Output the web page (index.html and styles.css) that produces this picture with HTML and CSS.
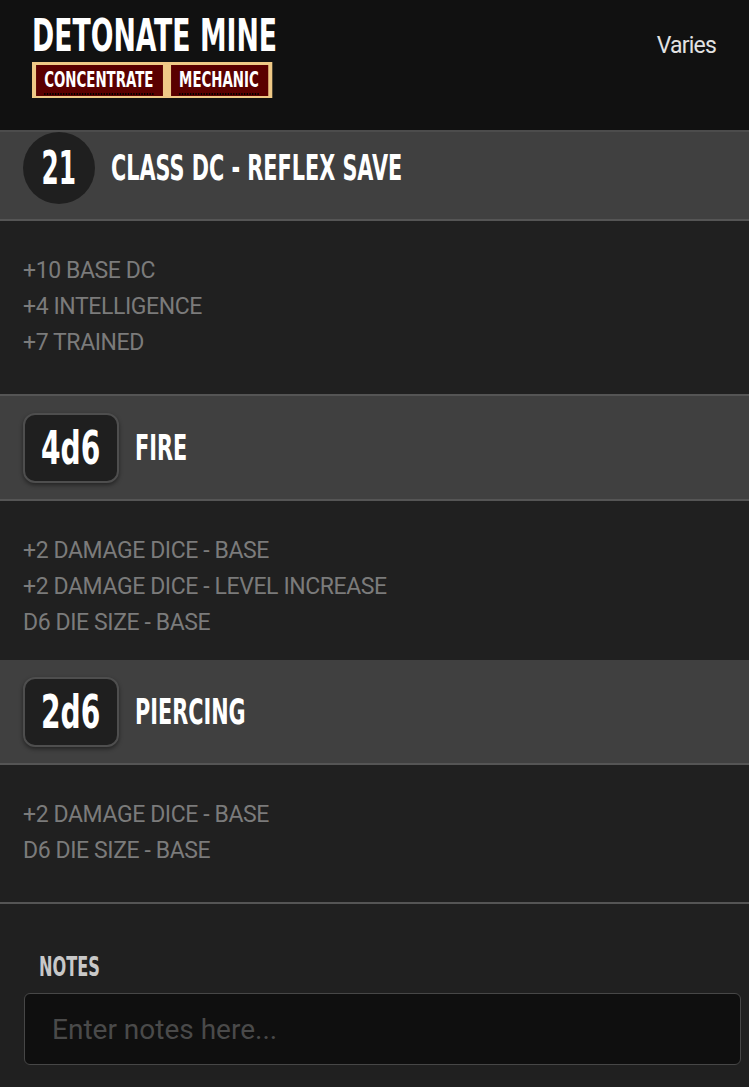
FILE: index.html
```html
<!DOCTYPE html>
<html lang="en">
<head>
    <meta charset="UTF-8">
    <meta name="viewport" content="width=device-width, initial-scale=1.0">
    <title>Detonate Mine</title>
    <link rel="stylesheet" href="styles.css">
</head>
<body>
    <div class="top">
        <div class="heading">
            <h1 class="name">DETONATE MINE</h1>
            <div class="traits">
                <span class="trait"><span>CONCENTRATE</span></span>
                <span class="trait"><span>MECHANIC</span></span>
            </div>
        </div>
        <div class="cost">Varies</div>
    </div>

    <div class="roll-head first">
        <div class="dc"><span>21</span></div>
        <h2 class="roll-title"><span>CLASS DC - REFLEX SAVE</span></h2>
    </div>
    <ul class="roll-list lined">
        <li>+10 BASE DC</li>
        <li>+4 INTELLIGENCE</li>
        <li>+7 TRAINED</li>
    </ul>

    <div class="roll-head">
        <div class="dice"><span>4d6</span></div>
        <h2 class="roll-title"><span>FIRE</span></h2>
    </div>
    <ul class="roll-list short">
        <li>+2 DAMAGE DICE - BASE</li>
        <li>+2 DAMAGE DICE - LEVEL INCREASE</li>
        <li>D6 DIE SIZE - BASE</li>
    </ul>

    <div class="roll-head">
        <div class="dice"><span>2d6</span></div>
        <h2 class="roll-title"><span>PIERCING</span></h2>
    </div>
    <ul class="roll-list lined">
        <li>+2 DAMAGE DICE - BASE</li>
        <li>D6 DIE SIZE - BASE</li>
    </ul>

    <div class="notes">
        <label for="notes" class="notes-label"><span>NOTES</span></label>
        <input type="text" id="notes" placeholder="Enter notes here...">
    </div>
</body>
</html>
```

FILE: styles.css
```css
body {
    margin: 0;
    background-color: #202020;
    font-family: Roboto, "Liberation Sans", sans-serif;
}
.top {
    display: flex;
    justify-content: space-between;
    align-items: flex-start;
    height: 132px;
    box-sizing: border-box;
    padding: 14px 33px 0 32px;
    background-color: #111111;
    border-bottom: 2px solid #4c4c4c;
}
.heading {
    transform: scaleX(0.675);
    transform-origin: left top;
}
.name {
    margin: 0;
    font: bold 44px/44px "DejaVu Sans Condensed", "DejaVu Sans", sans-serif;
    color: #ffffff;
    white-space: nowrap;
}
.traits {
    display: inline-flex;
    gap: 12px;
    margin-top: 4px;
    padding: 3px 6px 2px;
    background-color: #efc986;
}
.trait {
    padding: 2px 14px 1px 12px;
    background-color: #5a0000;
    color: #ffffff;
    font: bold 22px/26px "DejaVu Sans Condensed", "DejaVu Sans", sans-serif;
}
.trait span {
    display: block;
    border-bottom: 2px dotted #000000;
}
.cost {
    margin-top: 20px;
    font-size: 23px;
    line-height: 23px;
    letter-spacing: -0.8px;
    color: #e2e2e2;
}
.roll-head {
    display: flex;
    align-items: center;
    gap: 16px;
    padding: 17px 0 16px 23px;
    background-color: #404040;
    border-bottom: 2px solid #555555;
}
.roll-head.first {
    padding-top: 0;
    padding-bottom: 15px;
}
.dc, .dice {
    display: flex;
    align-items: center;
    justify-content: center;
    background-color: #1f1f1f;
    color: #ffffff;
    font: bold 46px/1 "DejaVu Sans Condensed", "DejaVu Sans", sans-serif;
}
.dc {
    width: 72px;
    height: 72px;
    border-radius: 50%;
}
.dc span {
    transform: scaleX(0.6);
}
.dice {
    width: 96px;
    height: 70px;
    box-sizing: border-box;
    border: 2px solid #4e4e4e;
    border-radius: 12px;
    box-shadow: 0 2px 4px rgba(0, 0, 0, 0.45);
}
.dice span {
    transform: scaleX(0.68);
}
.roll-title {
    margin: 0;
    color: #ffffff;
    font: bold 35px/1 "DejaVu Sans Condensed", "DejaVu Sans", sans-serif;
    white-space: nowrap;
}
.roll-title span {
    display: inline-block;
    transform: scaleX(0.66);
    transform-origin: left center;
}
.roll-list {
    list-style: none;
    margin: 0;
    padding: 32px 0 33px 23px;
    font-size: 23px;
    line-height: 36px;
    letter-spacing: -0.4px;
    color: #7b7b7b;
}
.roll-list.lined {
    border-bottom: 2px solid #555555;
}
.roll-list.short {
    padding-bottom: 19px;
}
.notes {
    padding: 50px 8px 20px 24px;
}
.notes-label {
    display: block;
    padding-left: 15px;
    color: #c8c8c8;
    font: bold 26px/26px "DejaVu Sans Condensed", "DejaVu Sans", sans-serif;
}
.notes-label span {
    display: inline-block;
    transform: scaleX(0.69);
    transform-origin: left center;
}
#notes {
    display: block;
    width: 100%;
    height: 72px;
    box-sizing: border-box;
    margin-top: 13px;
    padding: 0 0 0 27px;
    background-color: #0f0f0f;
    border: 1px solid #474747;
    border-radius: 6px;
    color: #cccccc;
    font-family: Roboto, "Liberation Sans", sans-serif;
    font-size: 28px;
}
#notes::placeholder {
    color: #4a4a4a;
}
```
